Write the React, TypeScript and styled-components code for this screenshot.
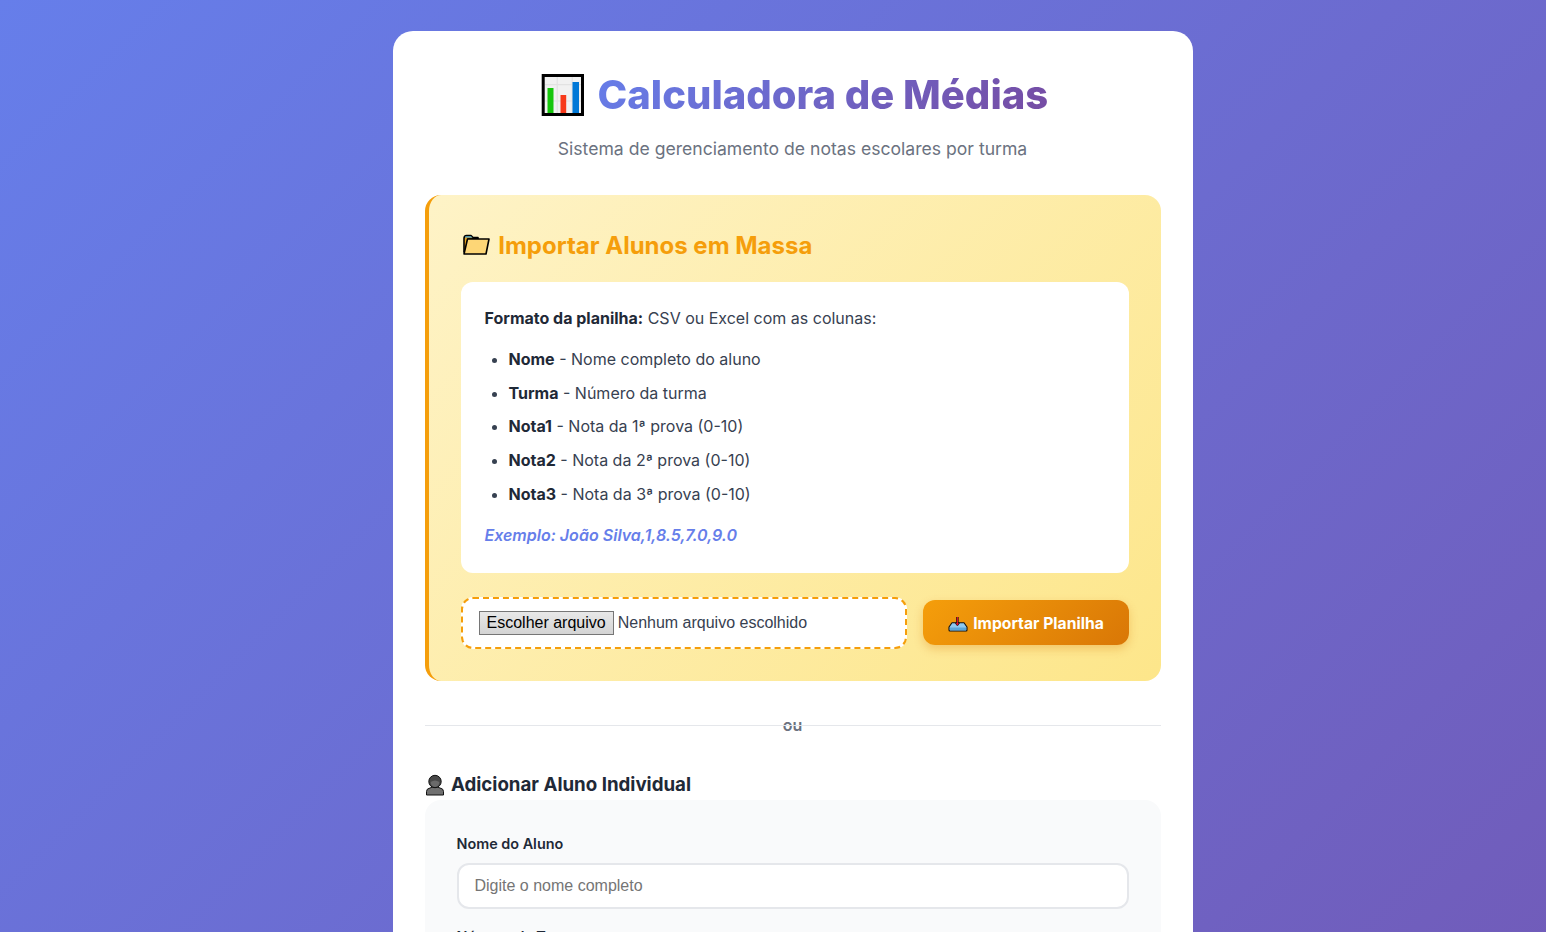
import React from 'react';
import styled, { createGlobalStyle } from 'styled-components';

const GlobalStyle = createGlobalStyle`
  * {
    box-sizing: border-box;
  }

  html,
  body {
    margin: 0;
    padding: 0;
  }

  body {
    font-family: 'Inter', 'Noto Sans', sans-serif;
    font-size: 16px;
    color: #1f2937;
    background: linear-gradient(135deg, #667eea 0%, #764ba2 100%);
    min-height: 100vh;
  }
`;

const Page = styled.div`
  min-height: 2200px;
  padding: 31px 0 31px 39px;
`;

const Container = styled.main`
  width: 800px;
  margin: 0 auto;
  padding: 32px;
  background: #ffffff;
  border-radius: 20px;
`;

const Header = styled.header`
  text-align: center;
  margin-bottom: 32px;
`;

const Title = styled.h1`
  margin: 0 0 8px;
  font-size: 40px;
  line-height: 64px;
  font-weight: 800;
`;

const TitleText = styled.span`
  color: #6b6fd8;
  background: linear-gradient(135deg, #667eea 0%, #764ba2 100%);
  -webkit-background-clip: text;
  background-clip: text;
  -webkit-text-fill-color: transparent;
`;

const ChartIcon = styled.svg`
  width: 52px;
  height: 48px;
  vertical-align: -8px;
`;

const Subtitle = styled.p`
  margin: 0;
  font-size: 17.6px;
  line-height: 28px;
  color: #6b7280;
`;

const ImportSection = styled.section`
  padding: 32px;
  background: linear-gradient(135deg, #fef3c7 0%, #fde68a 100%);
  border-left: 4px solid #f59e0b;
  border-radius: 16px;
`;

const ImportTitle = styled.h2`
  margin: 0 0 16px;
  height: 39px;
  font-size: 24px;
  line-height: 38px;
  font-weight: 700;
  color: #f59e0b;
`;

const FolderIcon = styled.svg`
  width: 32px;
  height: 30px;
  vertical-align: -4px;
`;

const InfoBox = styled.div`
  padding: 24px;
  margin-bottom: 24px;
  background: #ffffff;
  border-radius: 12px;
  line-height: 25.6px;
  color: #374151;
`;

const InfoText = styled.p`
  margin: 0 0 8px;
`;

const InfoList = styled.ul`
  margin: 15.3px 0 15.7px;
  padding-left: 24px;
`;

const InfoItem = styled.li`
  margin-bottom: 8.2px;
`;

const Strong = styled.strong`
  font-weight: 700;
  color: #1f2937;
`;

const Example = styled.p`
  margin: 0;
  font-weight: 600;
  font-style: italic;
  color: #667eea;
`;

const ImportRow = styled.div`
  display: flex;
  align-items: center;
  gap: 16px;
`;

const FileBox = styled.div`
  flex: 1;
  display: flex;
  align-items: center;
  height: 52px;
  padding: 0 16px;
  background: #ffffff;
  border: 2px dashed #f59e0b;
  border-radius: 12px;
  font-family: 'Liberation Sans', Arial, sans-serif;
  font-size: 16px;
  color: #374151;
`;

const FileButton = styled.button`
  height: 24px;
  padding: 0 7px;
  margin-right: 4px;
  font-family: inherit;
  font-size: 16px;
  color: #000000;
  background: linear-gradient(#e8e8e8, #d4d4d4);
  border: 1px solid #767676;
  border-radius: 0;
`;

const ImportButton = styled.button`
  width: 206px;
  height: 45px;
  padding: 0;
  font-family: 'Inter', sans-serif;
  font-size: 15.7px;
  font-weight: 700;
  color: #ffffff;
  background: linear-gradient(135deg, #f59e0b 0%, #d97706 100%);
  border: 0;
  border-radius: 12px;
  box-shadow: 0 4px 10px rgba(217, 119, 6, 0.3);
`;

const TrayIcon = styled.svg`
  width: 22px;
  height: 22px;
  margin-right: 4px;
  vertical-align: -5px;
`;

const Divider = styled.div`
  position: relative;
  margin: 44px 0 0;
  height: 1px;
  text-align: center;

  &::after {
    content: '';
    position: absolute;
    inset: 0;
    background: #e5e7eb;
  }
`;

const DividerText = styled.span`
  position: relative;
  top: -10px;
  display: inline-block;
  font-size: 16px;
  font-weight: 600;
  line-height: 16px;
  color: #6b7280;
`;

const SectionTitle = styled.h3`
  margin: 44px 0 0;
  font-size: 18.72px;
  line-height: 30px;
  font-weight: 700;
  color: #1f2937;
`;

const PersonIcon = styled.svg`
  width: 22px;
  height: 24px;
  vertical-align: -5px;
`;

const FormCard = styled.div`
  padding: 32px;
  background: #f9fafb;
  border-radius: 16px;
`;

const Field = styled.div`
  margin-bottom: 16px;
`;

const Label = styled.label`
  display: block;
  margin-bottom: 8px;
  font-size: 14.4px;
  line-height: 23px;
  font-weight: 600;
  color: #1f2937;
`;

const TextInput = styled.input`
  display: block;
  width: 100%;
  height: 46px;
  padding: 0 16px;
  font-family: 'Liberation Sans', Arial, sans-serif;
  font-size: 16px;
  background: #ffffff;
  border: 2px solid #e5e7eb;
  border-radius: 12px;
  outline: none;

  &::placeholder {
    color: #757575;
  }
`;

const SubmitButton = styled.button`
  width: 100%;
  height: 50px;
  font-family: 'Inter', sans-serif;
  font-size: 16px;
  font-weight: 600;
  color: #ffffff;
  background: linear-gradient(135deg, #667eea 0%, #764ba2 100%);
  border: 0;
  border-radius: 12px;
`;

const fields = [
  { label: 'Nome do Aluno', placeholder: 'Digite o nome completo' },
  { label: 'Número da Turma', placeholder: 'Ex: 1' },
  { label: 'Nota 1', placeholder: '0 a 10' },
  { label: 'Nota 2', placeholder: '0 a 10' },
  { label: 'Nota 3', placeholder: '0 a 10' },
];

function Chart(): React.ReactElement {
  return (
    <ChartIcon viewBox='0 0 52 48' aria-hidden='true'>
      <rect x='6.2' y='6.5' width='39.3' height='39' fill='#f1f1f1' stroke='#000' strokeWidth='3' />
      <path d='M8 15.7h36M8 32h36M20.2 8v36M35.2 8v36' stroke='#e2e2e2' strokeWidth='1.2' fill='none' />
      <rect x='10.500' y='19' width='6' height='25' fill='#16c60c' />
      <rect x='23.500' y='26' width='5.7' height='18' fill='#f7391a' />
      <rect x='35.500' y='13' width='6.5' height='31' fill='#0078d7' />
    </ChartIcon>
  );
}

function Folder(): React.ReactElement {
  return (
    <FolderIcon viewBox='0 0 32 30' aria-hidden='true'>
      <path
        d='M3 10.5 C3 8.500 4 7.500 5.500 7.500 H10 L12 9.500 H17 V11 H7 L5 24 H3 Z'
        fill='#e9a21a'
        stroke='#000'
        strokeWidth='1.6'
        strokeLinejoin='round'
      />
      <path d='M4.500 8.200 H10 L11.500 9.600 H4 Z' fill='#2f9fe0' />
      <path
        d='M6.500 11 H28 L25 26 H3 Z'
        fill='#fdd676'
        stroke='#000'
        strokeWidth='1.6'
        strokeLinejoin='round'
      />
    </FolderIcon>
  );
}

function Tray(): React.ReactElement {
  return (
    <TrayIcon viewBox='0 0 22 22' aria-hidden='true'>
      <path
        d='M2 15 L5 10.800 H17 L20 15 V18 Q20 19 19 19 H3 Q2 19 2 18 Z'
        fill='#8ec8ee'
        stroke='#111'
        strokeWidth='1.100'
        strokeLinejoin='round'
      />
      <path d='M3 15.500 H19 V18.300 H3 Z' fill='#5aa6d8' />
      <path d='M10.400 5 V13' stroke='#111' strokeWidth='2.400' />
      <path d='M8.200 11 L10.400 14 L12.600 11 Z' fill='#e8112d' stroke='#111' strokeWidth='0.600' />
      <path d='M10.400 5 V12' stroke='#e8112d' strokeWidth='1.100' />
    </TrayIcon>
  );
}

function Person(): React.ReactElement {
  return (
    <PersonIcon viewBox='0 0 22 24' aria-hidden='true'>
      <path
        d='M1.500 23 V19.500 Q1.500 16.500 5 16 L7.500 15 H12.500 L15 16 Q18.500 16.500 18.500 19.500 V23 Z'
        fill='#707070'
        stroke='#111'
        strokeWidth='1'
        strokeLinejoin='round'
      />
      <circle cx='10' cy='9.500' r='6.200' fill='#484848' stroke='#111' strokeWidth='1' />
      <path d='M5.600 10 Q10 7 14.400 10 Q14 14.500 10 15 Q6 14.500 5.600 10 Z' fill='#6a6a6a' />
    </PersonIcon>
  );
}

export default function App(): React.ReactElement {
  return (
    <>
      <GlobalStyle />
      <Page>
        <Container>
          <Header>
            <Title>
              <Chart /> <TitleText>Calculadora de Médias</TitleText>
            </Title>
            <Subtitle>Sistema de gerenciamento de notas escolares por turma</Subtitle>
          </Header>

          <ImportSection>
            <ImportTitle>
              <Folder /> Importar Alunos em Massa
            </ImportTitle>
            <InfoBox>
              <InfoText>
                <Strong>Formato da planilha:</Strong> CSV ou Excel com as colunas:
              </InfoText>
              <InfoList>
                <InfoItem><Strong>Nome</Strong> - Nome completo do aluno</InfoItem>
                <InfoItem><Strong>Turma</Strong> - Número da turma</InfoItem>
                <InfoItem><Strong>Nota1</Strong> - Nota da 1ª prova (0-10)</InfoItem>
                <InfoItem><Strong>Nota2</Strong> - Nota da 2ª prova (0-10)</InfoItem>
                <InfoItem><Strong>Nota3</Strong> - Nota da 3ª prova (0-10)</InfoItem>
              </InfoList>
              <Example>Exemplo: João Silva,1,8.5,7.0,9.0</Example>
            </InfoBox>
            <ImportRow>
              <FileBox>
                <FileButton type='button'>Escolher arquivo</FileButton>
                Nenhum arquivo escolhido
              </FileBox>
              <ImportButton type='button'>
                <Tray />
                Importar Planilha
              </ImportButton>
            </ImportRow>
          </ImportSection>

          <Divider>
            <DividerText>ou</DividerText>
          </Divider>

          <SectionTitle>
            <Person /> Adicionar Aluno Individual
          </SectionTitle>
          <FormCard>
            {fields.map((field) => (
              <Field key={field.label}>
                <Label>{field.label}</Label>
                <TextInput placeholder={field.placeholder} />
              </Field>
            ))}
            <SubmitButton type='button'>Adicionar Aluno</SubmitButton>
          </FormCard>
        </Container>
      </Page>
    </>
  );
}
